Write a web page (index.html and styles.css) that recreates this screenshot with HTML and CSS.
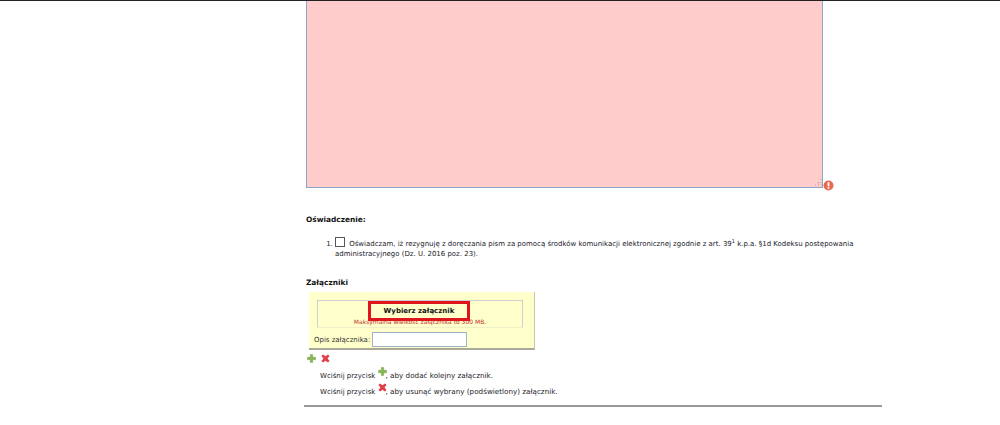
FILE: index.html
```html
<!DOCTYPE html>
<html lang="pl">
<head>
<meta charset="utf-8">
<title>Załączniki</title>
<link rel="stylesheet" href="styles.css">
</head>
<body>
<div class="page">
  <div class="field-row">
    <div class="textarea"><svg class="grip" width="8" height="8" viewBox="0 0 8 8"><path d="M7 1v1M4 4v1h1M7 4v1M1 7h1M4 7h1M7 7h1" stroke="#a9a9a9" fill="none"/></svg></div>
    <svg class="error" width="11" height="11" viewBox="0 0 11 11"><circle cx="5.5" cy="5.5" r="5" fill="#e8694f"/><rect x="4.600" y="2.200" width="1.800" height="4.200" fill="#fff"/><rect x="4.600" y="7.200" width="1.800" height="1.600" fill="#fff"/></svg>
  </div>
  <h2 class="heading declaration">Oświadczenie:</h2>
  <ol class="list">
    <li><span class="check"></span> Oświadczam, iż rezygnuję z doręczania pism za pomocą środków komunikacji elektronicznej zgodnie z art. 39<sup>1</sup> k.p.a. §1d Kodeksu postępowania administracyjnego (Dz. U. 2016 poz. 23).</li>
  </ol>
  <h2 class="heading attachments">Załączniki</h2>
  <div class="panel">
    <div class="upload">
      <div class="button">Wybierz załącznik</div>
      <div class="limit">Maksymalna wielkość załącznika to 300 MB.</div>
    </div>
    <div class="desc"><span>Opis załącznika:</span><span class="input"></span></div>
  </div>
  <div class="actions">
    <svg class="icon" width="9" height="9" viewBox="0 0 11 11"><path class="plus" d="M4 .5h3v3.500h3.500v3H7v3.500H4V7H.5V4H4z"/></svg>
    <svg class="icon" width="9" height="9" viewBox="0 0 11 11"><path class="cross" d="M2.500 .5 5.500 2.800 8.500 .5 10.500 2.500 8 5.500 10.500 8.500 8.500 10.500 5.500 8.200 2.500 10.500 .5 8.500 3 5.500 .5 2.500z"/></svg>
  </div>
  <p class="hint first"><span>Wciśnij przycisk</span> <svg class="icon inline" width="9" height="9" viewBox="0 0 11 11"><path class="plus" d="M4 .5h3v3.500h3.500v3H7v3.500H4V7H.5V4H4z"/></svg><span class="tail">, aby dodać kolejny załącznik.</span></p>
  <p class="hint second"><span>Wciśnij przycisk</span> <svg class="icon inline" width="9" height="9" viewBox="0 0 11 11"><path class="cross" d="M2.500 .5 5.500 2.800 8.500 .5 10.500 2.500 8 5.500 10.500 8.500 8.500 10.500 5.500 8.200 2.500 10.500 .5 8.500 3 5.500 .5 2.500z"/></svg><span class="tail">, aby usunąć wybrany (podświetlony) załącznik.</span></p>
  <div class="rule"></div>
</div>
</body>
</html>
```
FILE: styles.css
```css
* { box-sizing: border-box; }
html, body { margin: 0; padding: 0; height: 425px; overflow: hidden; background: #fff; }
body {
  border-top: 1px solid #222;
  font-family: "DejaVu Sans", Verdana, sans-serif;
  font-size: 6.98px;
  color: #1a1a2a;
}
.page { width: 578px; margin-left: 304px; }
.field-row { display: flex; align-items: flex-end; padding-left: 2px; }
.textarea {
  width: 517px;
  height: 187px;
  background: #ffcccc;
  border: 1px solid #8ea4c8;
  border-top: 0;
  display: flex;
  justify-content: flex-end;
  align-items: flex-end;
}
.grip { margin: 0 0 1px; }
.error { margin-bottom: -3px; }
.heading { margin: 0; font-size: 7.4px; line-height: 12px; font-weight: 700; color: #111; padding-left: 2px; }
.declaration { margin-top: 26px; }
.list { margin: 13px 0 0; padding: 0 0 0 31px; line-height: 10px; width: 560px; }
.check {
  display: inline-block;
  width: 10px;
  height: 10px;
  border: 1px solid #555;
  margin: -2px 2px 0 0;
  vertical-align: top;
}
sup { font-size: 5px; line-height: 0; }
.attachments { margin-top: 18px; }
.panel {
  width: 226px;
  height: 58px;
  margin: 3px 0 0 5px;
  background: #ffffcc;
  border-right: 1px solid #c8c8a8;
  border-bottom: 2px solid #a9a99a;
  padding: 8px 0 0 8px;
}
.upload {
  width: 206px;
  height: 28px;
  border: 1px solid #cfcfcf;
  border-bottom-color: #f0f0c8;
  text-align: center;
}
.button {
  width: 102px;
  height: 20px;
  margin: 0 0 0 50px;
  border: 3px solid #e0141c;
  background: #ffffcc;
  font-weight: 700;
  font-size: 7px;
  line-height: 15px;
  color: #111;
}
.limit { color: #c03030; font-size: 6px; line-height: 8px; margin-top: -3px; }
.desc { display: flex; align-items: center; gap: 2px; margin: 4px 0 0 -3px; color: #333; }
.input { width: 95px; height: 15px; background: #fff; border: 1px solid #9fb3c8; }
.actions { display: flex; gap: 5px; padding-left: 3px; margin-top: 4px; height: 9px; }
.icon { display: block; }
.icon.inline { display: inline-block; vertical-align: 2px; margin-right: -1px; }
.plus { fill: #86b552; stroke: #6aa048; stroke-width: .5; }
.cross { fill: #e0404a; }
.hint { margin: 0; padding-left: 16px; line-height: 12px; }
.tail { font-size: 7.2px; }
.first { margin-top: 4px; }
.second { margin-top: 1px; }
.rule { height: 2px; background: #999; margin-top: 7px; }
```
